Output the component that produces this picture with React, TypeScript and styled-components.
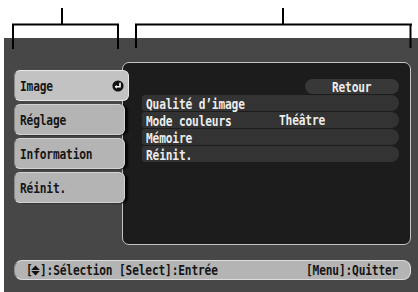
import React from "react";
import styled, { createGlobalStyle } from "styled-components";

const Global = createGlobalStyle`
  html, body { margin: 0; padding: 0; background: #ffffff; }
  body { font-family: "DejaVu Sans Mono", "Liberation Mono", monospace; }
`;

const Page = styled.div`
  width: 418px;
  height: 292px;
  overflow: hidden;
  background: #ffffff;
`;

const Annotation = styled.div`
  position: relative;
  z-index: 2;
  height: 38px;
  svg { display: block; overflow: visible; }
`;

const Screen = styled.div`
  position: relative;
  z-index: 0;
  margin-left: 4px;
  height: 254px;
  box-sizing: border-box;
  padding: 24px 7px 0 10px;
  background: #474747;
  display: flex;
  flex-direction: column;
`;

const Main = styled.div`
  display: flex;
  align-items: flex-start;
`;

/* Tall, narrow OSD lettering: a monospace face squeezed horizontally */
const Txt = styled.span<{ $origin?: "left" | "center" | "right" }>`
  display: inline-block;
  font-family: "DejaVu Sans Mono", "Liberation Mono", monospace;
  font-weight: bold;
  font-size: 14px;
  letter-spacing: -0.2px;
  line-height: 1;
  white-space: pre;
  transform: scaleX(0.8);
  transform-origin: ${(p) => p.$origin ?? "left"} center;
`;

const Menu = styled.div`
  position: relative;
  z-index: 1;
  margin-top: 8px;
  width: 115px;
  display: flex;
  flex-direction: column;
  gap: 3px;
`;

const MenuItem = styled.div<{ $active?: boolean }>`
  box-sizing: border-box;
  height: 31px;
  width: ${(p) => (p.$active ? "115px" : "111px")};
  padding: 0 4px 0 5px;
  display: flex;
  align-items: center;
  justify-content: space-between;
  border: 1px solid ${(p) => (p.$active ? "#e6e6e6" : "#d2d2d2")};
  border-left-color: #8a8a8a;
  border-radius: 6px;
  background: ${(p) => (p.$active ? "#c2c2c2" : "#b4b4b4")};
  box-shadow: ${(p) => (p.$active ? "none" : "4px 1px 2px -1px #050505")};
  color: #161616;
`;

const Panel = styled.div`
  margin-left: -7px;
  width: 289px;
  height: 183px;
  box-sizing: border-box;
  border: 1px solid #c4c4c4;
  border-radius: 7px;
  background: #1c1c1c;
  padding: 16px 11px 0 19px;
  display: flex;
  flex-direction: column;
  gap: 1px;
  color: #ececec;
`;

const BackPill = styled.div`
  align-self: flex-end;
  width: 94px;
  height: 15px;
  border-radius: 8px;
  background: #383838;
  display: flex;
  align-items: center;
  justify-content: center;
`;

const Row = styled.div`
  height: 16px;
  border-radius: 3px 8px 8px 3px;
  background: #333333;
  display: flex;
  align-items: center;
  padding-left: 4px;
`;

const RowLabel = styled.span`
  width: 133px;
  flex: none;
`;

const HelpBar = styled.div`
  margin-top: 15px;
  height: 20px;
  box-sizing: border-box;
  border: 1px solid #dcdcdc;
  border-left-color: #8c8c8c;
  border-radius: 8px;
  background: #b4b4b4;
  padding: 0 12px 0 11px;
  display: flex;
  align-items: center;
  justify-content: space-between;
  color: #151515;
`;

const HelpGroup = styled.span`
  display: inline-flex;
  align-items: center;
`;

const Brackets = () => (
  <svg width="418" height="50" viewBox="0 0 418 50">
    <g stroke="#000" strokeWidth="2" fill="none">
      <line x1="62" y1="8" x2="62" y2="24" />
      <line x1="12" y1="24.5" x2="119" y2="24.5" />
      <line x1="13" y1="24" x2="13" y2="49" />
      <line x1="118" y1="24" x2="118" y2="49" />
      <line x1="283" y1="8" x2="283" y2="24" />
      <line x1="135" y1="24.5" x2="412" y2="24.5" />
      <line x1="136" y1="24" x2="136" y2="48" />
      <line x1="410.5" y1="24" x2="410.5" y2="48" />
    </g>
  </svg>
);

const EnterIcon = () => (
  <svg width="12" height="12" viewBox="0 0 12 12">
    <circle cx="6" cy="6" r="5.6" fill="#111" />
    <path d="M8 2.8 V6.8 H4.2" stroke="#fff" strokeWidth="1.6" fill="none" />
    <path d="M2.6 6.8 L4.8 4.9 L4.8 8.7 Z" fill="#fff" />
  </svg>
);

const UpDownIcon = () => (
  <svg width="9" height="11" viewBox="0 0 9 11">
    <path d="M4.5 0.5 L8.8 5 H0.2 Z" fill="#111" />
    <path d="M0.2 6 H8.8 L4.5 10.5 Z" fill="#111" />
  </svg>
);

const HelpBracket = styled(Txt)`
  width: 5.4px;
`;

const menu = ["Image", "Réglage", "Information", "Réinit."];
const rows: [string, string][] = [
  ["Qualité d’image", ""],
  ["Mode couleurs", "Théâtre"],
  ["Mémoire", ""],
  ["Réinit.", ""],
];

export default function App() {
  return (
    <Page>
      <Global />
      <Annotation>
        <Brackets />
      </Annotation>
      <Screen>
        <Main>
          <Menu>
            {menu.map((m, i) => (
              <MenuItem key={m} $active={i === 0}>
                <Txt>{m}</Txt>
                {i === 0 && <EnterIcon />}
              </MenuItem>
            ))}
          </Menu>
          <Panel>
            <BackPill>
              <Txt $origin="center">Retour</Txt>
            </BackPill>
            {rows.map(([label, value]) => (
              <Row key={label}>
                <RowLabel>
                  <Txt>{label}</Txt>
                </RowLabel>
                <Txt>{value}</Txt>
              </Row>
            ))}
          </Panel>
        </Main>
        <HelpBar>
          <HelpGroup>
            <HelpBracket>[</HelpBracket>
            <UpDownIcon />
            <Txt>]:Sélection [Select]:Entrée</Txt>
          </HelpGroup>
          <Txt $origin="right">[Menu]:Quitter</Txt>
        </HelpBar>
      </Screen>
    </Page>
  );
}
